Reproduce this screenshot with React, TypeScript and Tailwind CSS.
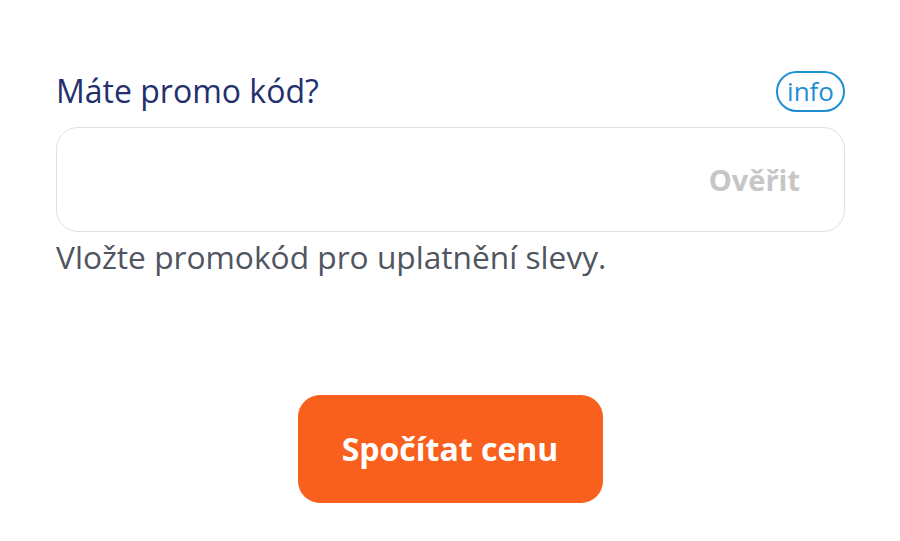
export default function App() {
  return (
    <div className="w-[900px] h-[541px] bg-white" style={{ fontFamily: '"Open Sans", sans-serif' }}>
      <div className="pl-[56px] pr-[55px] pt-[69px]">
        <div className="flex items-center justify-between h-[44px]">
          <div className="text-[32px] leading-[44px] text-[#24306e]">Máte promo kód?</div>
          <div className="h-[41px] px-[9px] rounded-full border-2 border-[#1e8fd6] text-[#1e8fd6] text-[26px] leading-none flex items-center">info</div>
        </div>
        <div className="mt-[14px] h-[105px] rounded-[22px] border border-[#dedfe5] flex items-center justify-end pr-[44px]">
          <span className="text-[29px] font-bold text-[#c6c6c6]">Ověřit</span>
        </div>
        <div className="mt-[6px] text-[31.7px] leading-[38px] text-[#50555f]">Vložte promokód pro uplatnění slevy.</div>
      </div>
      <div className="flex justify-center mt-[119px]">
        <button className="w-[305px] h-[108px] rounded-[22px] bg-[#f9601d] text-white text-[32px] font-bold">Spočítat cenu</button>
      </div>
    </div>
  );
}
